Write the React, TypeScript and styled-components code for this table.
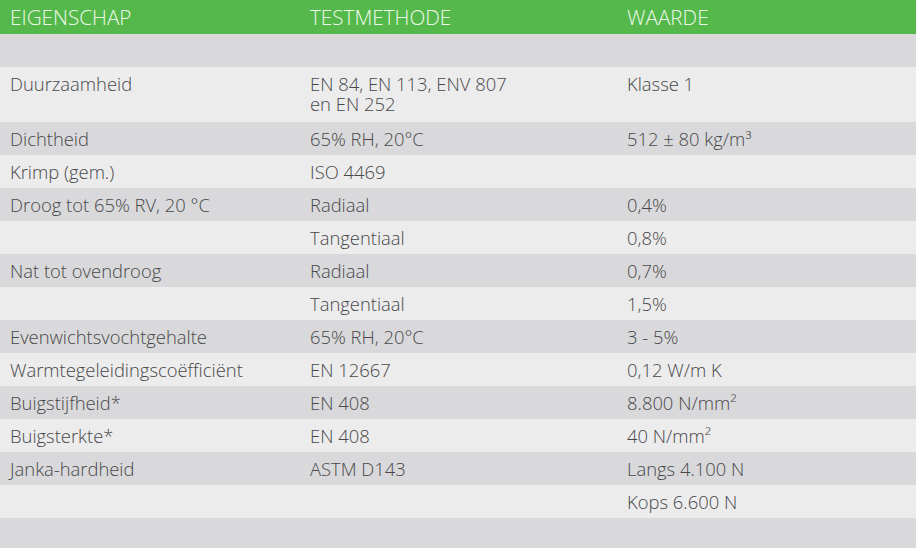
import React from 'react';
import styled, { createGlobalStyle } from 'styled-components';

const GlobalStyle = createGlobalStyle`
  html, body {
    margin: 0;
    padding: 0;
    background: #ececed;
    overflow: hidden;
  }
  body {
    font-family: 'Open Sans', 'Liberation Sans', sans-serif;
  }
`;

const Table = styled.div`
  width: 916px;
  display: flex;
  flex-direction: column;
`;

const HeadRow = styled.div`
  display: grid;
  grid-template-columns: 300px 317px 1fr;
  background-color: #55b84a;
  height: 34px;
  align-items: center;
`;

const HeadCell = styled.div`
  padding: 0 10px;
  font-size: 20.7px;
  font-weight: 350;
  line-height: 20px;
  color: #eef8ea;
  text-transform: uppercase;
`;

const Row = styled.div<{ shade: boolean; tall?: boolean }>`
  display: grid;
  grid-template-columns: 300px 317px 1fr;
  min-height: 33px;
  box-sizing: border-box;
  padding: ${({ tall }) => (tall ? '7px 0 9px' : '7px 0 6px')};
  background-color: ${({ shade }) => (shade ? '#d9d9db' : '#ececed')};
`;

const Cell = styled.div`
  padding: 0 10px;
  font-size: 18.4px;
  font-weight: 350;
  line-height: 19.5px;
  color: #48484a;
  white-space: pre-line;
`;

type Line = [string, string, string];

const rows: Line[] = [
  ['', '', ''],
  ['Duurzaamheid', 'EN 84, EN 113, ENV 807\nen EN 252', 'Klasse 1'],
  ['Dichtheid', '65% RH, 20°C', '512 ± 80 kg/m³'],
  ['Krimp (gem.)', 'ISO 4469', ''],
  ['Droog tot 65% RV, 20 °C', 'Radiaal', '0,4%'],
  ['', 'Tangentiaal', '0,8%'],
  ['Nat tot ovendroog', 'Radiaal', '0,7%'],
  ['', 'Tangentiaal', '1,5%'],
  ['Evenwichtsvochtgehalte', '65% RH, 20°C', '3 - 5%'],
  ['Warmtegeleidingscoëfficiënt', 'EN 12667', '0,12 W/m K'],
  ['Buigstijfheid*', 'EN 408', '8.800 N/mm²'],
  ['Buigsterkte*', 'EN 408', '40 N/mm²'],
  ['Janka-hardheid', 'ASTM D143', 'Langs 4.100 N'],
  ['', '', 'Kops 6.600 N'],
  ['', '', ''],
];

export default function App() {
  return (
    <>
      <GlobalStyle />
      <Table>
        <HeadRow>
          <HeadCell>Eigenschap</HeadCell>
          <HeadCell>Testmethode</HeadCell>
          <HeadCell>Waarde</HeadCell>
        </HeadRow>
        {rows.map(([prop, method, value], i) => (
          <Row key={i} shade={i % 2 === 0} tall={method.includes('\n')}>
            <Cell>{prop}</Cell>
            <Cell>{method}</Cell>
            <Cell>{value}</Cell>
          </Row>
        ))}
      </Table>
    </>
  );
}
